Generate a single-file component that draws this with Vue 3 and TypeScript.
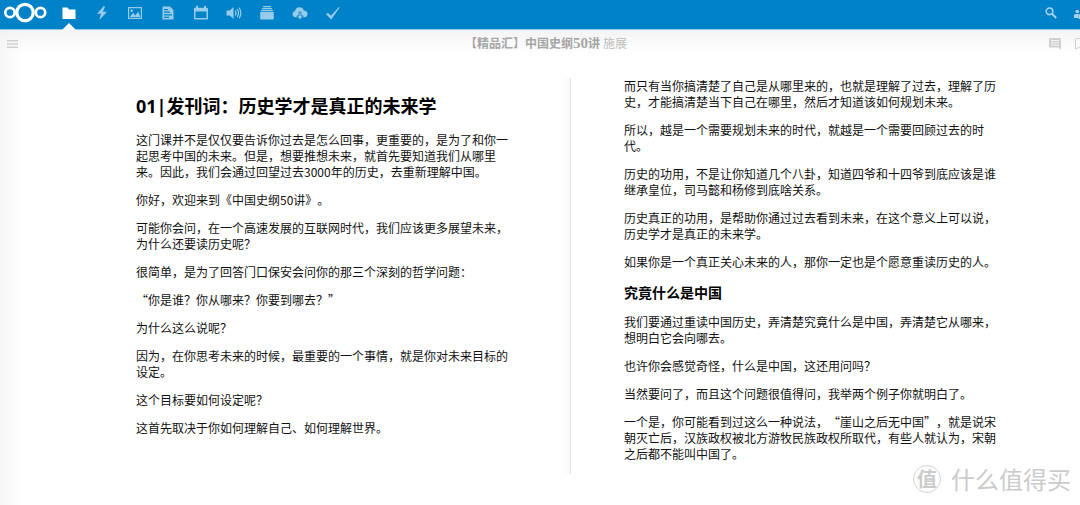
<script setup lang="ts">
const apps: string[] = ['文件', '动态', '相册', '文档', '日历', '音乐', '看板', '下载', '任务']

const leftParagraphs: string[] = [
  '这门课并不是仅仅要告诉你过去是怎么回事，更重要的，是为了和你一起思考中国的未来。但是，想要推想未来，就首先要知道我们从哪里来。因此，我们会通过回望过去3000年的历史，去重新理解中国。',
  '你好，欢迎来到《中国史纲50讲》。',
  '可能你会问，在一个高速发展的互联网时代，我们应该更多展望未来，为什么还要读历史呢？',
  '很简单，是为了回答门口保安会问你的那三个深刻的哲学问题：',
  '“你是谁？你从哪来？你要到哪去？”',
  '为什么这么说呢？',
  '因为，在你思考未来的时候，最重要的一个事情，就是你对未来目标的设定。',
  '这个目标要如何设定呢？',
  '这首先取决于你如何理解自己、如何理解世界。',
]

const rightParagraphs: string[] = [
  '而只有当你搞清楚了自己是从哪里来的，也就是理解了过去，理解了历史，才能搞清楚当下自己在哪里，然后才知道该如何规划未来。',
  '所以，越是一个需要规划未来的时代，就越是一个需要回顾过去的时代。',
  '历史的功用，不是让你知道几个八卦，知道四爷和十四爷到底应该是谁继承皇位，司马懿和杨修到底啥关系。',
  '历史真正的功用，是帮助你通过过去看到未来，在这个意义上可以说，历史学才是真正的未来学。',
  '如果你是一个真正关心未来的人，那你一定也是个愿意重读历史的人。',
]

const sectionParagraphs: string[] = [
  '我们要通过重读中国历史，弄清楚究竟什么是中国，弄清楚它从哪来，想明白它会向哪去。',
  '也许你会感觉奇怪，什么是中国，这还用问吗？',
  '当然要问了，而且这个问题很值得问，我举两个例子你就明白了。',
  '一个是，你可能看到过这么一种说法，“崖山之后无中国”，就是说宋朝灭亡后，汉族政权被北方游牧民族政权所取代，有些人就认为，宋朝之后都不能叫中国了。',
]
</script>

<template>
  <div class="app" lang="zh-CN">
    <header class="topbar">
      <a class="logo" href="#" aria-label="首页">
        <svg width="44" height="24" viewBox="0 0 44 24" fill="none" stroke="#fff">
          <circle cx="7" cy="12.500" r="4.700" stroke-width="2.700" />
          <circle cx="22" cy="12.500" r="8.200" stroke-width="3.200" />
          <circle cx="37.500" cy="12.500" r="4.700" stroke-width="2.700" />
        </svg>
      </a>
      <nav class="apps">
        <a v-for="(name, i) in apps" :key="name" href="#" class="app-link" :class="{ active: i === 0 }" :aria-label="name">
          <svg width="16" height="16" viewBox="0 0 16 16" fill="currentColor">
            <path v-if="i === 0" d="M1.500 2.500h5l1.500 2h6.500v9.500h-13z" />
            <path v-else-if="i === 1" d="M9.800 1 3 8.800h4L5.400 15l7.600-8.300H8.800L11 1.700z" />
            <template v-else-if="i === 2">
              <path fill-rule="evenodd" d="M1 2h14v12H1zM2.200 3.200v9.600h11.600V3.200z" />
              <path d="M3 12 6 7.800l2.200 2.700 3-3.700L13.300 12z" />
              <circle cx="4.700" cy="5.700" r="1.300" />
            </template>
            <path v-else-if="i === 3" fill-rule="evenodd" d="M2.500 1.500h7.500l3.500 3.500v9.500h-11zM4 4v1.200h4V4zm0 2.600v1.200h6V6.600zm0 2.600v1.200h8V9.200zm0 2.600V13h5v-1.200z" />
            <path v-else-if="i === 4" fill-rule="evenodd" d="M3 .8h2v2h6v-2h2v2h1q1 0 1 1V13.500q0 1-1 1H2q-1 0-1-1V3.800q0-1 1-1h1zM2.500 6.500V13h11V6.500z" />
            <template v-else-if="i === 5">
              <path d="M.5 5.500h3.200L7.500 2v12L3.700 10.500H.5z" />
              <path fill="none" stroke="currentColor" stroke-width="1.200" d="M9.200 5.500q1.600 2.500 0 5M11.200 4q2.600 4 0 8M13.200 2.800q3.300 5.200 0 10.400" />
            </template>
            <path v-else-if="i === 6" d="M4 1h8v1.200H4zM3 3h10v1.200H3zM2 5h12v1.200H2zM1.200 7h13.600v6.500q0 1-1 1H2.200q-1 0-1-1z" />
            <template v-else-if="i === 7">
              <path d="M4 12.200q-3.500-.2-3.500-3.200 0-2.500 2.600-2.900Q3.500 2.300 7.500 2.200q3.400 0 4.200 3.300 3.800.2 3.800 3.400 0 3.100-3.500 3.300z" />
              <path stroke="#0082c9" stroke-width=".8" d="M7 7h2v4h2.300L8 14.800 4.700 11H7z" />
            </template>
            <path v-else d="M1 9 3 7.800l2.800 3L13.900 2l.8.5-8.500 12z" />
          </svg>
        </a>
      </nav>
      <div class="tools">
        <button type="button" aria-label="搜索">
          <svg width="14" height="14" viewBox="0 0 14 14" fill="none" stroke="currentColor">
            <circle cx="5.500" cy="5.300" r="3.300" stroke-width="1.600" />
            <path stroke-width="2" d="m8 7.800 4.200 4.200" />
          </svg>
        </button>
        <button type="button" aria-label="联系人">
          <svg width="14" height="14" viewBox="0 0 14 14" fill="currentColor">
            <circle cx="3.300" cy="5.500" r="1.800" />
            <path d="M0 12V9.500Q0 8 1.500 8h3.200v4z" />
            <circle cx="9" cy="4" r="2.500" />
            <path d="M4.500 13v-3q0-2.500 2.500-2.500h4q2.500 0 2.500 2.500v3z" />
          </svg>
        </button>
      </div>
    </header>

    <div class="reader">
      <div class="titlebar">
        <button type="button" aria-label="目录">
          <svg width="12" height="10" viewBox="0 0 12 10" fill="currentColor">
            <path d="M0 1h11v1.500H0zM0 4.300h11v1.500H0zM0 7.600h11v1.500H0z" />
          </svg>
        </button>
        <p class="book"><strong>【精品汇】中国史纲<span class="count">50</span>讲</strong> <span>施展</span></p>
        <div class="marks">
          <button type="button" aria-label="批注">
            <svg width="12" height="12" viewBox="0 0 12 12" fill="currentColor">
              <path fill-rule="evenodd" d="M1 0h10q1 0 1 1v11L9.500 9.500H1q-1 0-1-1V1q0-1 1-1zM2 2v1h8V2zm0 2.300v1h8v-1zm0 2.300v1h8v-1z" />
            </svg>
          </button>
          <button type="button" aria-label="书签">
            <svg width="12" height="12" viewBox="0 0 12 12" fill="none" stroke="currentColor">
              <path d="M.5 11V1.500q0-1 1-1h9q1 0 1 1V11L6 8.700z" />
            </svg>
          </button>
        </div>
      </div>

      <main class="spread">
        <article class="page first">
          <h1>01|发刊词：历史学才是真正的未来学</h1>
          <p v-for="text in leftParagraphs" :key="text">{{ text }}</p>
        </article>
        <div class="spine"></div>
        <article class="page">
          <p v-for="text in rightParagraphs" :key="text">{{ text }}</p>
          <h2>究竟什么是中国</h2>
          <p v-for="text in sectionParagraphs" :key="text">{{ text }}</p>
        </article>
      </main>
    </div>

    <div class="watermark">
      <span class="seal">值</span>
      <span>什么值得买</span>
    </div>
  </div>
</template>

<style>
body {
  margin: 0;
  background: #fff;
}
</style>

<style scoped>
.app {
  position: relative;
  display: flex;
  flex-direction: column;
  min-height: 100vh;
  overflow: hidden;
  font-family: "Noto Sans CJK SC", "Noto Sans", sans-serif;
  text-spacing-trim: space-all;
  color: #111;
}

h1,
h2,
p {
  margin: 0;
}

button {
  display: flex;
  padding: 0;
  border: 0;
  background: none;
  color: inherit;
}

.topbar {
  display: flex;
  flex: none;
  height: 29px;
  background: #0082c9;
  border-bottom: 1px solid #8cc6e8;
}

.logo {
  margin: 0 5px 0 3px;
}

.apps {
  display: flex;
}

.app-link {
  position: relative;
  display: flex;
  justify-content: center;
  width: 33px;
  padding-top: 5px;
  color: #97cbea;
}

.app-link.active {
  color: #fff;
}

.app-link.active::after {
  content: "";
  position: absolute;
  bottom: -1px;
  border: 7px solid transparent;
  border-top-width: 0;
  border-bottom-color: #fff;
}

.tools {
  display: flex;
  gap: 16px;
  margin: 6px -8px 0 auto;
  color: #a6d2ed;
}

.reader {
  flex: 1;
  background:
    linear-gradient(#f3f3f3, #fff0 24px),
    linear-gradient(90deg, #f7f7f7, #fff0 24px),
    #fff;
}

.titlebar {
  display: flex;
  align-items: center;
  justify-content: space-between;
  height: 27px;
  padding-left: 7px;
  margin-right: -7px;
  color: #d0d0d0;
}

.book {
  padding-left: 24px;
  font-family: "Liberation Serif", "Noto Sans CJK SC", serif;
  font-size: 12px;
  line-height: 16px;
  color: #bdbdbd;
}

.book strong {
  color: #a6a6a6;
}

.count {
  font-size: 15px;
}

.marks {
  display: flex;
  gap: 14px;
}

.spread {
  display: grid;
  grid-template-columns: minmax(0, 1fr) 112px minmax(0, 1fr);
  padding: 21px 80px 28px 136px;
}

.page {
  font-size: 12px;
  line-height: 16px;
}

.page.first {
  padding-top: 16px;
}

.page p + p {
  margin-top: 12px;
}

h1 {
  margin-bottom: 14px;
  font-family: "Noto Sans", "Noto Sans CJK SC", sans-serif;
  font-size: 18px;
  line-height: 24px;
  color: #000;
}

h2 {
  margin: 12px 0;
  font-size: 14px;
  line-height: 20px;
  color: #000;
}

.spine {
  width: 8px;
  min-height: 396px;
  margin-left: 50px;
  border-right: 1px solid #e2e2e2;
  background: linear-gradient(90deg, #fff, #f8f8f8);
}

.watermark {
  position: absolute;
  right: 9px;
  bottom: 10px;
  display: flex;
  align-items: center;
  gap: 10px;
  font-size: 24px;
  line-height: 32px;
  color: #cbcbcb;
}

.seal {
  width: 26px;
  border: 1px solid #d4d4d4;
  border-radius: 50%;
  font-size: 20px;
  font-weight: 700;
  line-height: 26px;
  text-align: center;
}
</style>
